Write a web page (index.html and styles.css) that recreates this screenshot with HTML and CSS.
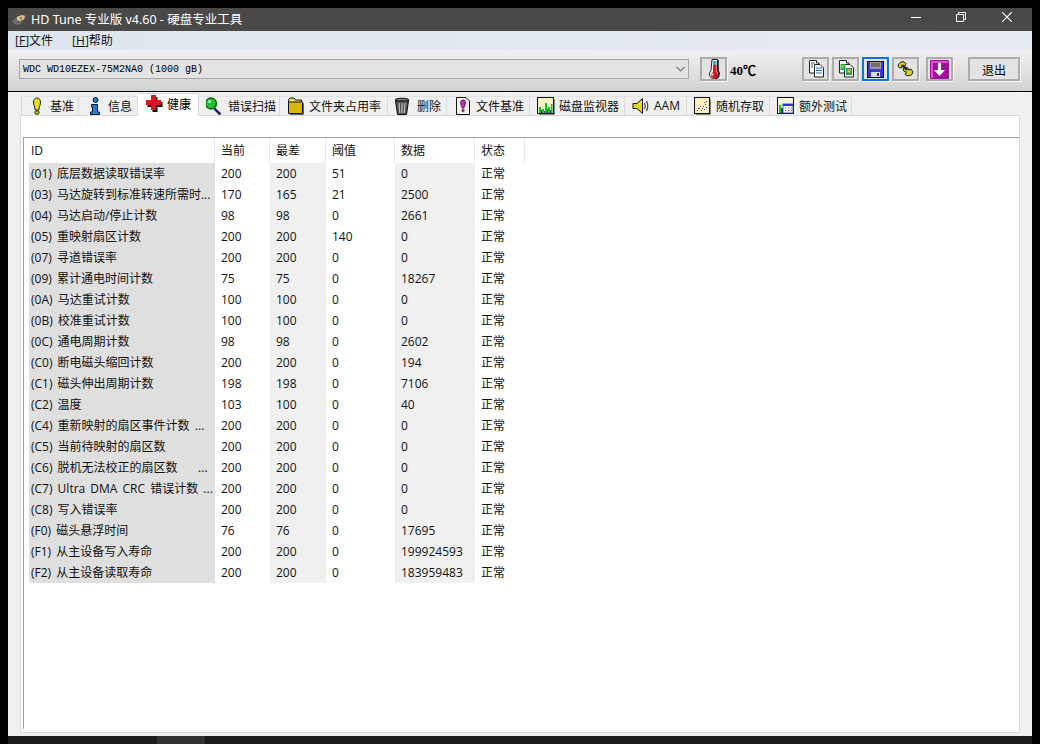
FILE: index.html
```html
<!DOCTYPE html>
<html lang="zh-CN">

<head>
  <meta charset="UTF-8">
  <title>HD Tune 专业版 v4.60 - 硬盘专业工具</title>
  <link rel="stylesheet" href="styles.css">
</head>

<body>
  <div class="window">
    <!-- 标题栏 -->
    <div class="titlebar">
      <svg class="app-icon" width="14" height="12" viewBox="0 0 14 12">
        <path d="M0 7 6 2 13 1 13 5 7 11 2 10Z" fill="#6d6a66"/>
        <path d="M5 3 10 1 13 2 12 5 8 7 5 6Z" fill="#d8c8a8"/>
        <circle cx="9" cy="4" r="1.5" fill="#b5793a"/>
      </svg>
      <span class="title-text">HD Tune 专业版 v4.60 - 硬盘专业工具</span>
      <div class="win-controls">
        <svg width="10" height="10" viewBox="0 0 10 10"><path d="M0 5.5H10" stroke="#fff"/></svg>
        <svg width="10" height="10" viewBox="0 0 10 10" fill="none" stroke="#fff"><path d="M.5 2.5h7v7h-7zM2.5 2.5v-2h7v7h-2"/></svg>
        <svg width="10" height="10" viewBox="0 0 10 10"><path d="M0 0 10 10M10 0 0 10" stroke="#fff" stroke-width="1.1"/></svg>
      </div>
    </div>

    <!-- 菜单 -->
    <div class="menubar">
      <span class="menu-item">[<u>F</u>]文件</span>
      <span class="menu-item">[<u>H</u>]帮助</span>
    </div>

    <!-- 工具栏 -->
    <div class="toolbar">
      <div class="drive-select">
        <span>WDC WD10EZEX-75M2NA0 (1000 gB)</span>
        <svg width="9" height="6" viewBox="0 0 9 6"><path d="M.5 1 4.5 5 8.5 1" fill="none" stroke="#777" stroke-width="1.2"/></svg>
      </div>
      <div class="tool-btn thermo">
        <svg width="14" height="20" viewBox="0 0 14 20">
          <path d="M5 .5H10.500V11.500A4.800 4.800 0 1 1 4 11.500Z" fill="#f2f2f2" stroke="#222"/>
          <path d="M11 1V12A5 5 0 0 1 9 19.500" fill="none" stroke="#111" stroke-width="1.500"/>
          <path d="M6 2H9.500V6H6Z" fill="#35b5c5"/>
          <path d="M6 6H9.500V13A3.400 3.400 0 1 1 4.500 14.500L6 13Z" fill="#e01020"/>
          <circle cx="5.500" cy="15.500" r="1" fill="#fff"/>
        </svg>
      </div>
      <span class="temp">40℃</span>
      <div class="tool-btn">
        <svg width="18" height="18" viewBox="0 0 18 18">
          <path d="M2.500 .5H9.500V3H12V13H2.500Z" fill="#fff" stroke="#222"/>
          <path d="M7.500 4.500H13L16.500 8V17H7.500Z" fill="#fff" stroke="#222"/>
          <path d="M9 8H15M9 10.500H15M9 13H15" stroke="#1a6fd0"/>
          <path d="M4 3H8M4 5H6M4 7H6" stroke="#555"/>
        </svg>
      </div>
      <div class="tool-btn">
        <svg width="18" height="18" viewBox="0 0 18 18">
          <path d="M2.500 .5H9.500V3H12V13H2.500Z" fill="#fff" stroke="#222"/>
          <path d="M7.500 4.500H13L16.500 8V17H7.500Z" fill="#fff" stroke="#222"/>
          <rect x="3.500" y="4" width="5" height="6" fill="#25b060"/>
          <rect x="9" y="8" width="6" height="7" fill="#25a060"/>
          <rect x="10.500" y="9.500" width="3" height="3" fill="#e8c020"/>
          <rect x="4.500" y="5.500" width="2" height="2" fill="#e8c020"/>
        </svg>
      </div>
      <div class="tool-btn save">
        <svg width="17" height="17" viewBox="0 0 17 17">
          <rect x=".5" y=".5" width="16" height="16" fill="#3a3ad0" stroke="#111"/>
          <rect x="3" y="1" width="11" height="7" fill="#9a9a9a"/>
          <path d="M4 3H13M4 5H13" stroke="#444"/>
          <rect x="4" y="11" width="9" height="5" fill="#ddd"/>
          <rect x="10" y="12" width="2" height="3" fill="#333"/>
        </svg>
      </div>
      <div class="tool-btn">
        <svg width="17" height="16" viewBox="0 0 17 16">
          <path d="M1 4 3 1.500 6 .5 9 2.500 8 5 5 4.500 4.500 7 2 6.500Z" fill="#e0cc20" stroke="#222"/>
          <path d="M6 8 8.500 6 11 7 11.500 9 14 8 16 11 14.500 14 11 15 8 13.500 9.500 11 7 10.500Z" fill="#e0cc20" stroke="#222"/>
          <path d="M5 4 10 9" stroke="#222" stroke-width="2"/>
        </svg>
      </div>
      <div class="tool-btn gap-left">
        <svg width="19" height="19" viewBox="0 0 19 19">
          <rect width="19" height="19" rx="1" fill="#a0109a"/>
          <path d="M1 1H18V3H3V18H1Z" fill="#e050d0"/>
          <path d="M8 3H11V10H15L9.500 16 4 10H8Z" fill="#fff"/>
        </svg>
      </div>
      <button class="exit-btn">退出</button>
    </div>

    <!-- 选项卡区域 -->
    <div class="content">
      <div class="tabs">
        <div class="tab">
          <svg class="tab-icon" viewBox="0 0 18 18"><path d="M9 1C11.500 1 12.500 3 12.500 5 12.500 8 11 10 10.800 13H7.200C7 10 5.500 8 5.500 5 5.500 3 6.500 1 9 1Z" fill="#e3e020" stroke="#222"/><ellipse cx="9" cy="15.500" rx="2.300" ry="1.800" fill="#c8c810" stroke="#222"/></svg>
          <span>基准</span>
        </div>
        <div class="tab">
          <svg class="tab-icon" viewBox="0 0 18 18"><circle cx="9.500" cy="3" r="2.500" fill="#1a80e0" stroke="#111"/><path d="M5.500 7.500H11.500V15H13.500V17.500H4.500V15H6.500V10H5.500Z" fill="#1a80e0" stroke="#111"/></svg>
          <span>信息</span>
        </div>
        <div class="tab active">
          <svg class="tab-icon" viewBox="0 0 18 18"><path d="M7 1H12V6H17V11H12V16H7V11H2V6H7Z" fill="#111" transform="translate(.5 1)"/><path d="M6 0H11V5H16V10H11V15H6V10H1V5H6Z" fill="#e01020"/></svg>
          <span>健康</span>
        </div>
        <div class="tab">
          <svg class="tab-icon" viewBox="2 0 18 18"><path d="M11 11 17 16.500 15.500 18 10 12.500Z" fill="#1010a0" stroke="#111" stroke-width=".6"/><circle cx="7" cy="6.500" r="5.500" fill="#22c030" stroke="#0a5a10" stroke-width="1.300"/><circle cx="5.500" cy="4.500" r="1.600" fill="#b0f0b0"/></svg>
          <span>错误扫描</span>
        </div>
        <div class="tab">
          <svg class="tab-icon" viewBox="0 0 18 18"><path d="M1.500 5V2.500L3 1H7L8.500 3H14.500V5" fill="#eadf70" stroke="#111"/><path d="M1.500 5H15.500V16.500H1.500Z" fill="#d8b810" stroke="#111"/><path d="M16.500 6V17.500H3" fill="none" stroke="#666"/></svg>
          <span>文件夹占用率</span>
        </div>
        <div class="tab">
          <svg class="tab-icon" viewBox="2 0 18 18"><ellipse cx="9" cy="3" rx="7" ry="1.800" fill="#777" stroke="#111"/><path d="M2.500 4 4.500 17.500H13.500L15.500 4Z" fill="#555" stroke="#111"/><path d="M6 6 6.800 16M9 6V16M12 6 11.200 16" stroke="#ccc"/></svg>
          <span>删除</span>
        </div>
        <div class="tab">
          <svg class="tab-icon" viewBox="0 0 18 18"><path d="M2.500 .5H12L15.500 4V17.500H2.500Z" fill="#f4f0e4" stroke="#111"/><path d="M9 3C11 3 11.500 4.500 11.500 6 11.500 8 10 9.500 10 11H8C8 9.500 6.500 8 6.500 6 6.500 4.500 7 3 9 3Z" fill="#d020c0" stroke="#222" stroke-width=".7"/><circle cx="9" cy="13.500" r="1.300" fill="#d020c0" stroke="#222" stroke-width=".6"/></svg>
          <span>文件基准</span>
        </div>
        <div class="tab">
          <svg class="tab-icon" viewBox="0 0 18 18"><rect x=".5" y=".5" width="16" height="16" fill="#f4f0c8" stroke="#111"/><path d="M2 16V10H4V16ZM5 16V12H7V16ZM8 16V6H10V16ZM11 16V10H13V16ZM14 16V7H15.500V16Z" fill="#10c020"/><path d="M4 16V13H5V16ZM7 16V14H8V16ZM10 16V12H11V16ZM13 16V13H14V16Z" fill="#1030d0"/><path d="M17.500 2V17.500H2" fill="none" stroke="#888"/></svg>
          <span>磁盘监视器</span>
        </div>
        <div class="tab">
          <svg class="tab-icon" viewBox="0 0 18 18"><path d="M1 6.500H5L10.500 1.500V16.500L5 11.500H1Z" fill="#e8d820" stroke="#111"/><path d="M12.500 6Q14 9 12.500 12M14.500 4Q17 9 14.500 14" fill="none" stroke="#444" stroke-width="1.200"/></svg>
          <span>AAM</span>
        </div>
        <div class="tab">
          <svg class="tab-icon" viewBox="0 0 18 18"><rect x=".5" y=".5" width="15" height="16" fill="#f8f0c0" stroke="#111"/><path d="M16.500 2V17.500H2" fill="none" stroke="#888"/><path d="M3 13h1v1H3zM5 11h1v1H5zM7 13h1v1H7zM9 9h1v1H9zM11 7h1v1h-1zM12 4h1v1h-1zM6 9h1v1H6z" fill="#d02020"/><path d="M4 11h1v1H4zM8 11h1v1H8zM10 5h1v1h-1zM12 10h1v1h-1zM10 12h1v1h-1z" fill="#2040c0"/></svg>
          <span>随机存取</span>
        </div>
        <div class="tab">
          <svg class="tab-icon" viewBox="0 0 18 18"><rect x=".5" y=".5" width="16" height="16" fill="#f8f4d8" stroke="#111"/><path d="M2 16V8H4V16Z" fill="#10c020"/><path d="M4 16V11H6V16Z" fill="#1030d0"/><rect x="6" y="7" width="10" height="9" fill="#fff" stroke="#2040a0" stroke-width=".8"/><rect x="6" y="7" width="10" height="2" fill="#2040c0"/><path d="M8 10.500h1v1H8zM11 10.500h1v1h-1zM14 10.500h1v1h-1zM8 13h1v1H8zM11 13h1v1h-1zM14 13h1v1h-1z" fill="#d02020"/></svg>
          <span>额外测试</span>
        </div>
      </div>

      <div class="panel">
        <div class="list">
          <div class="row head"><span>ID</span><span>当前</span><span>最差</span><span>阈值</span><span>数据</span><span>状态</span></div>
          <div class="row"><span>(01) 底层数据读取错误率</span><span>200</span><span>200</span><span>51</span><span>0</span><span>正常</span></div>
          <div class="row"><span>(03) 马达旋转到标准转速所需时...</span><span>170</span><span>165</span><span>21</span><span>2500</span><span>正常</span></div>
          <div class="row"><span>(04) 马达启动/停止计数</span><span>98</span><span>98</span><span>0</span><span>2661</span><span>正常</span></div>
          <div class="row"><span>(05) 重映射扇区计数</span><span>200</span><span>200</span><span>140</span><span>0</span><span>正常</span></div>
          <div class="row"><span>(07) 寻道错误率</span><span>200</span><span>200</span><span>0</span><span>0</span><span>正常</span></div>
          <div class="row"><span>(09) 累计通电时间计数</span><span>75</span><span>75</span><span>0</span><span>18267</span><span>正常</span></div>
          <div class="row"><span>(0A) 马达重试计数</span><span>100</span><span>100</span><span>0</span><span>0</span><span>正常</span></div>
          <div class="row"><span>(0B) 校准重试计数</span><span>100</span><span>100</span><span>0</span><span>0</span><span>正常</span></div>
          <div class="row"><span>(0C) 通电周期计数</span><span>98</span><span>98</span><span>0</span><span>2602</span><span>正常</span></div>
          <div class="row"><span>(C0) 断电磁头缩回计数</span><span>200</span><span>200</span><span>0</span><span>194</span><span>正常</span></div>
          <div class="row"><span>(C1) 磁头伸出周期计数</span><span>198</span><span>198</span><span>0</span><span>7106</span><span>正常</span></div>
          <div class="row"><span>(C2) 温度</span><span>103</span><span>100</span><span>0</span><span>40</span><span>正常</span></div>
          <div class="row"><span>(C4) 重新映射的扇区事件计数 ...</span><span>200</span><span>200</span><span>0</span><span>0</span><span>正常</span></div>
          <div class="row"><span>(C5) 当前待映射的扇区数</span><span>200</span><span>200</span><span>0</span><span>0</span><span>正常</span></div>
          <div class="row"><span>(C6) 脱机无法校正的扇区数    ...</span><span>200</span><span>200</span><span>0</span><span>0</span><span>正常</span></div>
          <div class="row"><span>(C7) Ultra DMA CRC 错误计数 ...</span><span>200</span><span>200</span><span>0</span><span>0</span><span>正常</span></div>
          <div class="row"><span>(C8) 写入错误率</span><span>200</span><span>200</span><span>0</span><span>0</span><span>正常</span></div>
          <div class="row"><span>(F0) 磁头悬浮时间</span><span>76</span><span>76</span><span>0</span><span>17695</span><span>正常</span></div>
          <div class="row"><span>(F1) 从主设备写入寿命</span><span>200</span><span>200</span><span>0</span><span>199924593</span><span>正常</span></div>
          <div class="row"><span>(F2) 从主设备读取寿命</span><span>200</span><span>200</span><span>0</span><span>183959483</span><span>正常</span></div>
        </div>
      </div>
    </div>
  </div>

  <!-- 屏幕底部的任务栏，只露出一点 -->
  <div class="taskbar">
    <div class="task-item"></div>
    <span class="clock">12:12:33</span>
  </div>
</body>

</html>
```

FILE: styles.css
```css
/* 整体布局 */
body {
  margin: 0;
  height: 744px;
  overflow: hidden;
  background-color: #000;
  font-family: "Open Sans", "Noto Sans CJK SC", sans-serif;
  font-size: 12px;
  color: #111;
}

.window {
  margin: 8px 8px 0;
  height: 728px;
  display: flex;
  flex-direction: column;
}

/* 标题栏 */
.titlebar {
  height: 23px;
  flex: none;
  display: flex;
  align-items: center;
  padding-left: 4px;
  background-color: #4a4947;
  color: #fff;
}

.app-icon {
  margin-right: 5px;
}

.title-text {
  font-size: 12.5px;
  line-height: 23px;
  font-family: "Noto Sans", "Noto Sans CJK SC", sans-serif;
}

.win-controls {
  margin-left: auto;
  display: flex;
  gap: 35px;
  padding-right: 20px;
  margin-top: -6px;
}

.win-controls svg:last-child {
  margin-left: 1px;
}

/* 菜单栏 */
.menubar {
  height: 19px;
  flex: none;
  display: flex;
  gap: 19px;
  align-items: center;
  padding-left: 7px;
  background: linear-gradient(to right, #dfe5ed, #e7ecf4);
  line-height: 19px;
}

/* 工具栏 */
.toolbar {
  height: 42px;
  flex: none;
  display: flex;
  align-items: center;
  padding: 0 12px 3px 11px;
  box-sizing: border-box;
  border-bottom: 1px solid #000;
  background: linear-gradient(#f0f0f0, #d2d2d2);
}

.drive-select {
  width: 670px;
  height: 20px;
  box-sizing: border-box;
  border: 1px solid #a6a6a6;
  background-color: #e3e3e3;
  display: flex;
  align-items: center;
  justify-content: space-between;
  padding: 0 3px;
  font-family: "Liberation Mono", monospace;
  font-size: 10px;
  color: #000;
}

.tool-btn {
  width: 27px;
  height: 24px;
  box-sizing: border-box;
  border: 2px solid #acacac;
  box-shadow: 1px 1px 0 #f6f6f6;
  background-color: #e3e3e3;
  display: flex;
  align-items: center;
  justify-content: center;
  margin-left: 3px;
}

.thermo {
  margin-left: 11px;
}

.temp {
  margin-left: 3px;
  flex: 1;
  font-family: "Liberation Serif", serif;
  font-weight: bold;
  font-size: 13px;
  color: #000;
}

.save {
  border-color: #0a74da;
}

.gap-left {
  margin-left: 7px;
}

.exit-btn {
  width: 52px;
  height: 24px;
  margin-left: 15px;
  padding: 0;
  box-sizing: border-box;
  border: 2px solid #acacac;
  box-shadow: 1px 1px 0 #f6f6f6;
  background-color: #e3e3e3;
  font-family: "Noto Sans CJK SC", sans-serif;
  font-size: 12px;
  color: #000;
}

/* 选项卡区域 */
.content {
  flex: 1;
  min-height: 0;
  display: flex;
  flex-direction: column;
  padding: 4px 12px 3px 12px;
  background-color: #f0f0f0;
}

.tabs {
  display: grid;
  grid-template-columns: 58px 59px 61px 81px 108px 59px 83px 95px 62px 83px 82px;
  height: 19px;
  flex: none;
  margin-left: 1px;
  position: relative;
  z-index: 1;
}

.tab {
  display: flex;
  align-items: center;
  gap: 4px;
  padding: 0 0 1px 7px;
  box-sizing: border-box;
  height: 19px;
  border-top: 1px solid #e2e2e2;
  border-right: 1px solid #d9d9d9;
  background-color: #f0f0f0;
  color: #111;
}

.tab:first-child {
  border-left: 1px solid #d9d9d9;
  padding-left: 6px;
}

.tab.active {
  height: 23px;
  margin-top: -3px;
  padding-bottom: 3px;
  background-color: #fff;
  border-top: 1px solid #d9d9d9;
  color: #000;
}

.tab-icon {
  width: 18px;
  height: 18px;
  flex: none;
}

.panel {
  flex: 1;
  min-height: 0;
  box-sizing: border-box;
  border: 1px solid #d9d9d9;
  background-color: #fff;
  padding: 21px 0 3px 2px;
}

/* 列表 */
.list {
  height: 100%;
  box-sizing: border-box;
  border-top: 1px solid #a0a0a4;
  border-left: 1px solid #a0a0a4;
  padding-left: 5px;
}

.row {
  display: grid;
  grid-template-columns: 186px 55px 56px 69px 80px 50px;
  width: 496px;
  height: 21px;
  line-height: 21px;
  white-space: pre;
  word-spacing: 2px;
}

.row span {
  padding-left: 6px;
  overflow: hidden;
}

.row span:nth-child(1) {
  padding-left: 2px;
  background-color: #dfdfdf;
}

.row span:nth-child(3),
.row span:nth-child(5) {
  background-color: #f0f0f0;
}

.row.head {
  height: 25px;
  line-height: 25px;
}

.row.head span {
  background-color: #fff;
  border-right: 1px solid #e8e8e8;
}

/* 任务栏 */
.taskbar {
  margin: 0 8px;
  height: 8px;
  display: flex;
  background-color: #1c1c1c;
  overflow: hidden;
}

.task-item {
  width: 48px;
  margin-left: 149px;
  background-color: #333231;
}

.clock {
  margin-left: auto;
  margin-right: 19px;
  color: #fff;
  line-height: 15px;
  padding-top: 5px;
  font-size: 12px;
}
```
